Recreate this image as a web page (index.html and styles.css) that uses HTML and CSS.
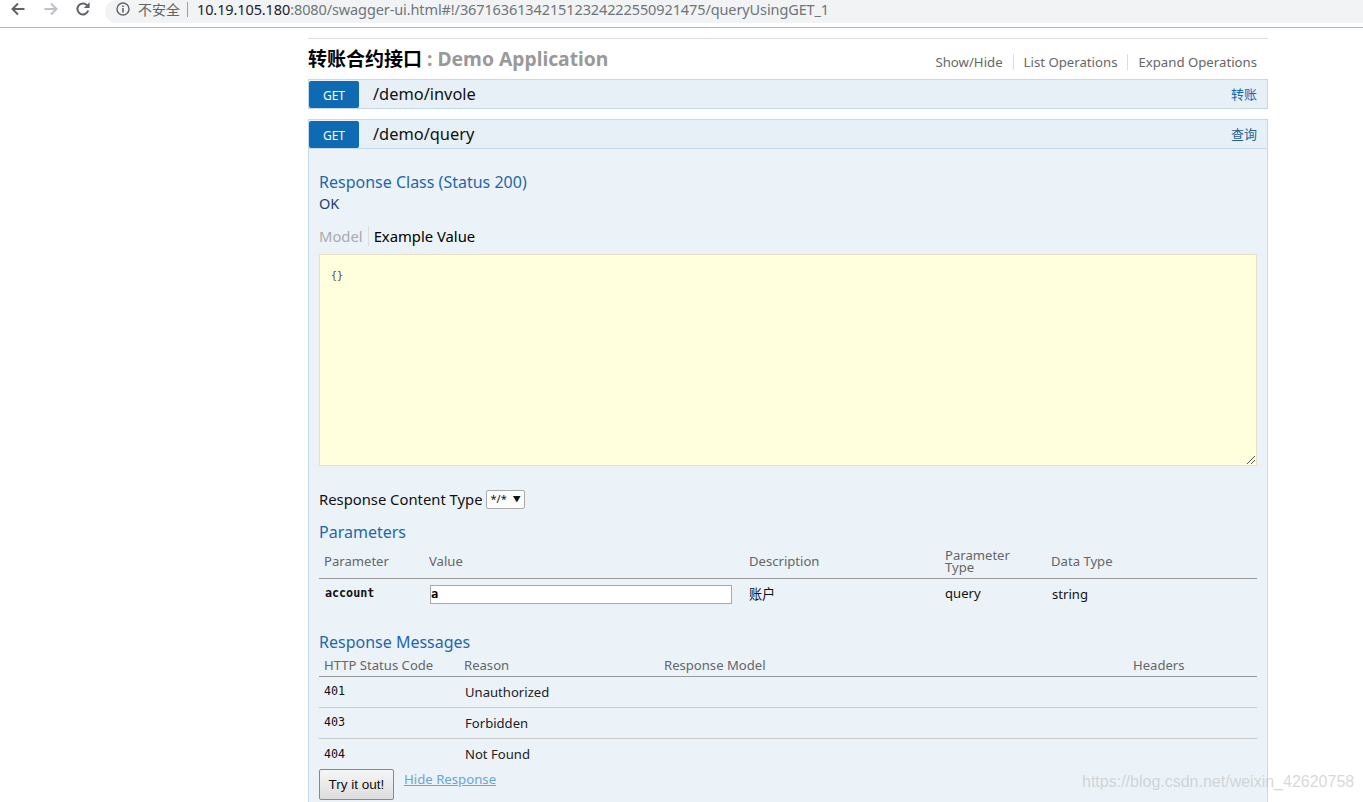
FILE: index.html
```html
<!DOCTYPE html>
<html lang="zh">
<head>
<meta charset="utf-8">
<title>Swagger UI</title>
<link rel="stylesheet" href="styles.css">
</head>
<body>
<header class="toolbar">
  <svg class="nav nav-back" viewBox="0 0 16 16" width="16" height="16"><path d="M14.5 8H2.5M8 2.5L2.5 8L8 13.5" fill="none" stroke="#5f6368" stroke-width="2"/></svg>
  <svg class="nav nav-fwd" viewBox="0 0 16 16" width="16" height="16"><path d="M1.5 8H13.5M8 2.5L13.5 8L8 13.5" fill="none" stroke="#bdc1c6" stroke-width="2"/></svg>
  <svg class="nav nav-reload" viewBox="0 0 16 16" width="16" height="16"><path d="M13.2 9.5A5.5 5.5 0 1 1 12 4.2" fill="none" stroke="#5f6368" stroke-width="2"/><path d="M14.6 1.2V7H8.8Z" fill="#5f6368"/></svg>
  <div class="omnibox">
    <svg class="info" viewBox="0 0 14 14" width="14" height="14"><circle cx="7" cy="7" r="6" fill="none" stroke="#5f6368" stroke-width="1.4"/><path d="M7 6v4.4M7 3.4v1.5" stroke="#5f6368" stroke-width="1.6"/></svg>
    <span class="insecure">不安全</span>
    <span class="url"><span class="url-host">10.19.105.180</span>:8080/swagger-ui.html#!/367163613421512324222550921475/queryUsingGET_1</span>
  </div>
</header>
<main class="page">
  <section class="resource">
    <div class="resource-head">
      <h2 class="resource-title"><span class="title-cn">转账合约接口</span><span class="title-app"> : Demo Application</span></h2>
      <ul class="resource-links">
        <li>Show/Hide</li>
        <li>List Operations</li>
        <li>Expand Operations</li>
      </ul>
    </div>
    <div class="op-bar op-bar-first">
      <span class="method">GET</span><span class="path">/demo/invole</span><span class="summary">转账</span>
    </div>
    <div class="op-bar">
      <span class="method">GET</span><span class="path">/demo/query</span><span class="summary summary-query">查询</span>
    </div>
    <div class="op-body">
      <h4 class="sect sect-class">Response Class (Status 200)</h4>
      <div class="ok">OK</div>
      <div class="tabs"><span class="tab-off">Model</span><span class="tab-on">Example Value</span></div>
      <div class="example"><code class="code">{}</code><svg class="grip" viewBox="0 0 10 10" width="10" height="10"><path d="M1 9L9 1M5 9L9 5" stroke="#555" stroke-width="1"/></svg></div>
      <div class="ctype"><span class="ctype-label">Response Content Type</span><span class="select">*/*<span class="caret">▼</span></span></div>
      <h4 class="sect sect-params">Parameters</h4>
      <table class="tbl params">
        <colgroup><col class="p1"><col class="p2"><col class="p3"><col class="p4"><col></colgroup>
        <thead><tr><th>Parameter</th><th>Value</th><th>Description</th><th class="two-line">Parameter<br>Type</th><th>Data Type</th></tr></thead>
        <tbody><tr><td class="mono">account</td><td class="value"><span class="input">a</span></td><td class="desc">账户</td><td class="q">query</td><td class="dtype">string</td></tr></tbody>
      </table>
      <h4 class="sect sect-msgs">Response Messages</h4>
      <table class="tbl msgs">
        <colgroup><col class="m1"><col class="m2"><col class="m3"><col></colgroup>
        <thead><tr><th>HTTP Status Code</th><th>Reason</th><th>Response Model</th><th>Headers</th></tr></thead>
        <tbody>
          <tr><td class="mono-n">401</td><td class="reason">Unauthorized</td><td></td><td></td></tr>
          <tr><td class="mono-n">403</td><td class="reason">Forbidden</td><td></td><td></td></tr>
          <tr><td class="mono-n">404</td><td class="reason">Not Found</td><td></td><td></td></tr>
        </tbody>
      </table>
      <div class="actions"><span class="btn">Try it out!</span><span class="hide">Hide Response</span></div>
    </div>
  </section>
  <div class="watermark">https://blog.csdn.net/weixin_42620758</div>
</main>
</body>
</html>
```
FILE: styles.css
```css
* { box-sizing: border-box; }
html, body { margin: 0; height: 802px; overflow: hidden; background: #fff; }
body { font-family: "Noto Sans", "Noto Sans CJK SC", sans-serif; font-size: 13.2px; color: #222; position: relative; }

.toolbar { height: 28px; border-bottom: 1px solid #b5b5b5; background: #fff; display: flex; align-items: flex-start; }
.nav { flex: none; margin-top: 1px; }
.nav-back { margin-left: 10px; }
.nav-fwd { margin-left: 17px; }
.nav-reload { margin-left: 16px; }
.omnibox { flex: 1; height: 23px; margin-left: 14px; background: #f1f3f4; border-radius: 12px 0 0 12px; display: flex; align-items: center; padding: 0 0 5px 11px; white-space: nowrap; }
.insecure { font-size: 14px; color: #5f6368; margin-left: 8px; padding-right: 7px; border-right: 1px solid #9aa0a6; line-height: 15px; }
.url { font-family: "Noto Sans", sans-serif; font-size: 14.5px; color: #70757a; margin-left: 9px; letter-spacing: -0.11px; }
.url-host { color: #202124; }

.page { width: 960px; margin-left: 308px; }
.resource { border-top: 1px solid #ddd; margin-top: 10px; }
.resource-head { height: 40px; display: flex; justify-content: space-between; align-items: flex-start; }
.resource-title { margin: 6px 0 0; font-size: 19.3px; line-height: 27px; font-weight: 700; white-space: nowrap; }
.title-cn { color: #000; font-size: 19px; }
.title-app { color: #999; }
.resource-links { display: flex; list-style: none; margin: 15px 11px 0 0; padding: 0; color: #666; font-size: 13.2px; line-height: 16px; }
.resource-links li { padding: 0 10px; border-left: 1px solid #ddd; }
.resource-links li:first-child { border-left: 0; }
.resource-links li:last-child { padding-right: 0; }

.op-bar { height: 30px; background: #e7f0f7; border: 1px solid #c3d9ec; display: flex; align-items: center; }
.op-bar-first { margin-bottom: 10px; }
.method { width: 50px; height: 27px; background: #0f6ab4; color: #fff; font-size: 12px; border-radius: 2px; display: flex; align-items: center; justify-content: center; padding-top: 3px; }
.path { margin-left: 14px; padding-bottom: 2px; font-size: 16.4px; color: #111; }
.summary { margin-left: auto; margin-right: 10px; padding-bottom: 2px; color: #0f6ab4; font-size: 13px; }
.summary-query { color: #2c5f8f; }

.op-body { height: 660px; background: #ebf3f9; border: 1px solid #c3d9ec; border-top: 0; padding: 0 10px; }
.sect { margin: 0; font-weight: 400; color: #1f66ad; font-size: 16px; line-height: 22px; }
.sect-class { padding-top: 22px; height: 44px; }
.ok { color: #1b4170; font-size: 14.5px; line-height: 20px; }
.tabs { margin-top: 11px; height: 24px; display: flex; align-items: center; font-size: 14.8px; }
.tab-off { color: #aaa; padding-right: 5px; border-right: 1px solid #ddd; }
.tab-on { color: #000; padding-left: 5px; }
.example { position: relative; height: 212px; margin-top: 6px; background: #ffd; border: 1px solid #e5e0c6; padding: 15px 11px; }
.code { display: block; font-family: "DejaVu Sans Mono", monospace; font-size: 10px; line-height: 12px; color: #554c33; }
.grip { position: absolute; right: 0; bottom: 0; }
.ctype { margin-top: 24px; height: 19px; display: flex; align-items: flex-start; font-size: 14.8px; color: #111; }
.ctype-label { line-height: 18px; }
.select { margin-left: 3px; width: 39px; height: 19px; background: #fff; border: 1px solid #aaa; border-radius: 2px; font-size: 11px; line-height: 16px; padding-left: 4px; display: flex; gap: 6px; }
.caret { font-size: 8px; color: #111; }
.sect-params { margin-top: 12px; }

.tbl { width: 938px; table-layout: fixed; border-collapse: collapse; }
.tbl th { font-weight: 400; color: #666; font-size: 13.1px; text-align: left; padding: 0 0 0 5px; border-bottom: 1px solid #999; vertical-align: bottom; }
.tbl td { padding: 0 0 0 5px; color: #222; border-bottom: 1px solid #ccc; font-size: 13.1px; }
.params th { line-height: 13px; height: 35px; padding-bottom: 10px; }
.params th.two-line { line-height: 12px; padding-bottom: 5px; }
.params td { border-bottom: 0; height: 31px; }
.p1 { width: 105px; }
.p2 { width: 320px; }
.p3 { width: 196px; }
.p4 { width: 106px; }
.tbl .mono { font-family: "DejaVu Sans Mono", monospace; font-size: 11.7px; font-weight: 700; color: #111; padding: 0 0 2px 6px; }
.tbl .q { padding-bottom: 2px; color: #111; }
.tbl .desc { color: #111; }
.tbl .dtype { padding-left: 6px; color: #111; }
.tbl .value { padding-top: 2px; }
.input { display: block; width: 302px; height: 19px; margin-left: 1px; background: #fff; border: 1px solid #aaa; font-family: "DejaVu Sans Mono", monospace; font-weight: 700; font-size: 12px; line-height: 17px; color: #000; }
.sect-msgs { margin-top: 22px; }
.msgs th { height: 23px; line-height: 16px; padding-bottom: 3px; }
.msgs td { height: 31px; }
.m1 { width: 140px; }
.m2 { width: 200px; }
.m3 { width: 469px; }
.tbl .mono-n { font-family: "DejaVu Sans Mono", monospace; font-size: 11.7px; color: #111; padding-bottom: 2px; }
.tbl .reason { padding-left: 6px; }
.msgs tbody tr:last-child td { border-bottom: 0; height: 30px; padding-top: 2px; }
.msgs tbody tr:last-child .mono-n { padding-bottom: 0; }
.actions { display: flex; align-items: flex-start; margin-top: 1px; }
.btn { width: 75px; height: 31px; border: 1px solid #888; border-radius: 2px; background: linear-gradient(#f6f6f6, #ddd); font-family: "Liberation Sans", sans-serif; font-size: 13.5px; color: #111; display: flex; align-items: center; justify-content: center; }
.hide { margin-left: 10px; color: #68a5d8; text-decoration: underline; font-size: 13.2px; line-height: 20px; }
.watermark { position: absolute; left: 1082px; top: 773px; font-family: "Liberation Sans", sans-serif; font-size: 16px; color: rgba(190, 190, 190, 0.6); white-space: nowrap; }
```
